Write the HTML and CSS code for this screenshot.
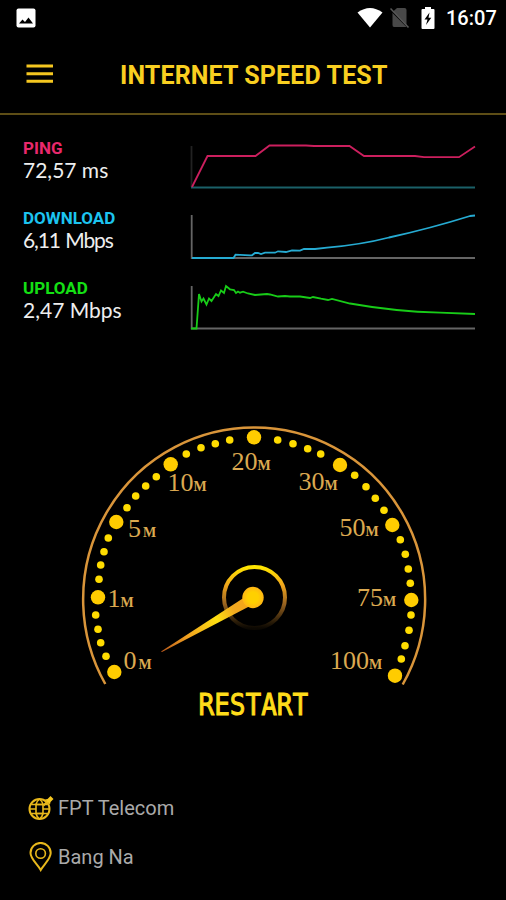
FILE: index.html
```
<!DOCTYPE html>
<html lang="en">

<head>
    <meta charset="UTF-8">
    <meta name="viewport" content="width=device-width, initial-scale=1.0">
    <title>Internet Speed Test</title>
    <link rel="stylesheet" href="styles.css">
</head>

<body>
    <div class="status-bar">
        <svg class="status-left" width="20" height="20" viewBox="0 0 20 20">
            <rect x="0.5" y="0.5" width="19" height="19" rx="2" fill="#fff"/>
            <path d="M3 15.5L6.5 11.5L9 14L12.5 9.5L17 15.5Z" fill="#000"/>
        </svg>
        <svg width="26" height="22" viewBox="0 0 26 22">
            <path d="M0.5 5.5Q13 -3.5 25.5 5.5L13 20.5Z" fill="#fff"/>
        </svg>
        <svg class="sim" width="20" height="22" viewBox="0 0 20 22">
            <path d="M7 1H14.5Q16.5 1 16.5 3V20H4Q2.5 20 2.5 18V5Z" fill="#484848"/>
            <path d="M0.5 3L17.5 20" stroke="#000" stroke-width="1.5"/>
            <path d="M0.5 1.5L18.5 20.5" stroke="#585858" stroke-width="1.5"/>
        </svg>
        <svg class="battery" width="14" height="22" viewBox="0 0 14 22">
            <path d="M4 0H10V2H12.5Q13.5 2 13.5 3V21Q13.5 22 12.5 22H1.5Q0.5 22 0.5 21V3Q0.5 2 1.5 2H4Z" fill="#fff"/>
            <path d="M8.5 5.5L3.5 12.5H6.5L5 18L10.3 10.7H7.5Z" fill="#000"/>
        </svg>
        <span class="clock">16:07</span>
    </div>

    <header class="header">
        <svg class="menu" width="28" height="20" viewBox="0 0 28 20">
            <path d="M0.5 2H27M0.5 9.7H27M0.5 17.3H27" stroke="#f5c720" stroke-width="3"/>
        </svg>
        <h1>INTERNET SPEED TEST</h1>
    </header>

    <main>
        <section class="results">
            <div class="result">
                <div class="reading">
                    <h2 class="ping">PING</h2>
                    <p class="value">72,57 ms</p>
                </div>
                <svg class="chart" width="300" height="60" viewBox="180 140 300 60">
                    <path d="M191.5 146V187" stroke="#222"/>
                    <path d="M191 187.5H475" stroke="#1a6068"/>
                    <path d="M192 187L207.5 156H255.5L269.5 145.5H306L314 146H349.5L364 156H415L424 157.2H459L475 146.5" stroke="#cc1f5e"/>
                </svg>
            </div>
            <div class="result">
                <div class="reading">
                    <h2 class="download">DOWNLOAD</h2>
                    <p class="value narrow">6,11 Mbps</p>
                </div>
                <svg class="chart" width="300" height="60" viewBox="180 210 300 60">
                    <path d="M191.7 215V258H475" stroke="#656565"/>
                    <path d="M192 258H233.5L235.5 254.7L250 255.3H252L255 253H258L261 254L265 252.7H275L278 251.3L286 252L292 250.3L300 250.7L304 249L315 249L327 247.7Q362 244.5 389 237.5Q430 228.5 470 216L475 215.5" stroke="#26abd2"/>
                </svg>
            </div>
            <div class="result">
                <div class="reading">
                    <h2 class="upload">UPLOAD</h2>
                    <p class="value">2,47 Mbps</p>
                </div>
                <svg class="chart" width="300" height="60" viewBox="180 280 300 60">
                    <path d="M191.7 286V328.5H475" stroke="#656565"/>
                    <path d="M191 328.5H196.500L199 294L201.5 301.5L203.5 298.5L206.5 304.5L209 298.5L211.5 301L216 294L218.5 296L221 290.5L224 293L226 286L230 289.3L234 290L236 293L238 291.5L240 292.7L243 291.7L248 293.5L255 295L267 294L270 294.5L278 296.5L285 296L290 296.5H300L310 298L313 297L321 298.7L328 300L332 299L350 303.5Q395 311.5 440 312.7L475 314" stroke="#18cc18"/>
                </svg>
            </div>
        </section>

        <section class="gauge">
            <svg width="370" height="280" viewBox="69 415 370 280">
                <defs>
                    <linearGradient id="ring" x1="0" y1="0" x2="0" y2="1">
                        <stop offset="0" stop-color="#ffe600"/>
                        <stop offset="0.3" stop-color="#f0a51c"/>
                        <stop offset="0.6" stop-color="#9a6420"/>
                        <stop offset="0.9" stop-color="#2a1c08"/>
                        <stop offset="1" stop-color="#0c0802"/>
                    </linearGradient>
                    <linearGradient id="needle" gradientUnits="userSpaceOnUse" x1="161" y1="651" x2="246" y2="601">
                        <stop offset="0" stop-color="#b8581c"/>
                        <stop offset="0.3" stop-color="#f0a020"/>
                        <stop offset="0.65" stop-color="#ffe010"/>
                        <stop offset="0.85" stop-color="#f0a820"/>
                        <stop offset="1" stop-color="#f5a518"/>
                    </linearGradient>
                    <radialGradient id="hub">
                        <stop offset="0.5" stop-color="#ffd000"/>
                        <stop offset="1" stop-color="#ffb515"/>
                    </radialGradient>
                </defs>

                <path class="rim" d="M105.300 684A171 171.800 0 1 1 402.700 684.500"/>

                <!-- scale: major marks -->
                <g fill="#ffcc00">
                    <circle cx="114.3" cy="672" r="7.2"/>
                    <circle cx="98" cy="597.3" r="7.2"/>
                    <circle cx="116.3" cy="522" r="7.2"/>
                    <circle cx="170.7" cy="464.3" r="7.2"/>
                    <circle cx="254" cy="437.3" r="7.2"/>
                    <circle cx="340" cy="465" r="7.2"/>
                    <circle cx="392.3" cy="525" r="7.2"/>
                    <circle cx="411.3" cy="600" r="7.2"/>
                    <circle cx="395" cy="675.7" r="7.2"/>
                </g>

                <!-- scale: minor marks -->
                <g fill="#ffdc00">
                    <circle cx="106" cy="656.3" r="3.8"/>
                    <circle cx="100.7" cy="642.7" r="3.8"/>
                    <circle cx="98" cy="629.3" r="3.8"/>
                    <circle cx="95.7" cy="615" r="3.8"/>
                    <circle cx="99" cy="579.3" r="3.8"/>
                    <circle cx="100.7" cy="565" r="3.8"/>
                    <circle cx="104" cy="551.7" r="3.8"/>
                    <circle cx="108.3" cy="538" r="3.8"/>
                    <circle cx="127" cy="507.7" r="3.8"/>
                    <circle cx="135.7" cy="496" r="3.8"/>
                    <circle cx="145.7" cy="486" r="3.8"/>
                    <circle cx="156.3" cy="476.7" r="3.8"/>
                    <circle cx="186.3" cy="454" r="3.8"/>
                    <circle cx="201" cy="447.7" r="3.8"/>
                    <circle cx="215.3" cy="443.7" r="3.8"/>
                    <circle cx="229.7" cy="440" r="3.8"/>
                    <circle cx="277.7" cy="440" r="3.8"/>
                    <circle cx="293" cy="443.7" r="3.8"/>
                    <circle cx="307.7" cy="448.7" r="3.8"/>
                    <circle cx="320.7" cy="454" r="3.8"/>
                    <circle cx="354.7" cy="475.3" r="3.8"/>
                    <circle cx="366" cy="486.7" r="3.8"/>
                    <circle cx="375.3" cy="498.3" r="3.8"/>
                    <circle cx="384" cy="510.3" r="3.8"/>
                    <circle cx="400.3" cy="539.7" r="3.8"/>
                    <circle cx="405.3" cy="554.3" r="3.8"/>
                    <circle cx="408.3" cy="569" r="3.8"/>
                    <circle cx="410.3" cy="583.3" r="3.8"/>
                    <circle cx="411" cy="615" r="3.8"/>
                    <circle cx="409" cy="630.3" r="3.8"/>
                    <circle cx="405" cy="645.7" r="3.8"/>
                    <circle cx="401.3" cy="659" r="3.8"/>
                </g>

                <g class="labels">
                    <text x="123.5" y="669">0<tspan class="unit" dx="2">M</tspan></text>
                    <text x="107.5" y="606.7">1<tspan class="unit">M</tspan></text>
                    <text x="128" y="537">5<tspan class="unit" dx="2">M</tspan></text>
                    <text x="167.5" y="490.7">10<tspan class="unit">M</tspan></text>
                    <text x="231.5" y="470">20<tspan class="unit">M</tspan></text>
                    <text x="298.5" y="490">30<tspan class="unit">M</tspan></text>
                    <text x="339.5" y="535.7">50<tspan class="unit">M</tspan></text>
                    <text x="357" y="605.5">75<tspan class="unit">M</tspan></text>
                    <text x="330" y="669">100<tspan class="unit">M</tspan></text>
                </g>

                <circle cx="254.5" cy="597.5" r="30.5" fill="none" stroke="url(#ring)" stroke-width="4"/>
                <path d="M161 651.5L245 597L250 606L162 652Z" fill="url(#needle)"/>
                <circle cx="253" cy="597.5" r="10.7" fill="url(#hub)"/>
            </svg>
            <button class="restart">RESTART</button>
        </section>
    </main>

    <footer class="info">
        <div class="info-row">
            <svg width="26" height="26" viewBox="0 0 26 26" fill="none" stroke="#e8b81c" stroke-width="1.6">
                <circle cx="11.5" cy="14" r="10" stroke-width="2"/>
                <path d="M8 9.500H15V18.500H8Z"/>
                <path d="M8 9.5Q8.500 6.500 11.5 4Q14.500 6.500 15 9.5M8 18.5Q8.500 21.500 11.5 24Q14.500 21.500 15 18.5"/>
                <path d="M3.500 9.500H19.500M3.500 18.500H19.500M1.500 14H8M15 14H21.500"/>
                <path d="M15.500 10.500L20 6" stroke-width="2"/>
                <path d="M17 4.500L19.500 4L22.500 1L25.500 4L22.500 7L22 9.500Z" fill="#f5c720" stroke="none"/>
            </svg>
            <span>FPT Telecom</span>
        </div>
        <div class="info-row">
            <svg width="26" height="30" viewBox="0 0 26 30" fill="none" stroke="#e8b81c">
                <path d="M12.7 28C10 23 2.5 17 2.5 11A10 10 0 0 1 22.7 11C22.7 17 15.4 23 12.7 28Z" stroke-width="2"/>
                <circle cx="12.6" cy="11.5" r="4.8" stroke-width="1.6"/>
            </svg>
            <span>Bang Na</span>
        </div>
    </footer>
</body>

</html>
```
FILE: styles.css
```
* {
    box-sizing: border-box;
}

body {
    margin: 0;
    width: 506px;
    height: 900px;
    background-color: #000;
    color: #fff;
    font-family: Roboto, sans-serif;
    overflow: hidden;
}

h1,
h2,
p {
    margin: 0;
}

svg {
    display: block;
    flex-shrink: 0;
}

.status-bar {
    display: flex;
    align-items: center;
    height: 35px;
    padding: 0 10px 0 16px;
}

.status-left {
    margin-right: auto;
}

.sim {
    margin-left: 7px;
}

.battery {
    margin-left: 11px;
}

.clock {
    width: 50px;
    margin-left: 11px;
    font-size: 20px;
    font-weight: 500;
    white-space: nowrap;
}

.header {
    display: flex;
    align-items: center;
    height: 80px;
    padding-left: 26px;
    border-bottom: 2px solid #5e4e16;
}

.menu {
    margin-right: 66px;
}

.header h1 {
    margin-top: 2px;
    color: #f9cf20;
    font-size: 25px;
    font-weight: 700;
    letter-spacing: 0.13px;
    white-space: nowrap;
}

.results {
    padding: 25px 26px 0 23px;
}

.result {
    display: flex;
    justify-content: space-between;
    height: 70px;
}

.reading {
    margin-top: -1px;
}

.reading h2 {
    font-size: 17px;
    font-weight: 700;
    line-height: 18px;
}

.ping {
    color: #e8286c;
}

.download {
    color: #1cc4f0;
}

.upload {
    color: #14e014;
}

.value {
    font-family: Lato, sans-serif;
    font-size: 21px;
    line-height: 26px;
    color: #eee;
    white-space: nowrap;
}

.value.narrow {
    letter-spacing: -1.1px;
    word-spacing: 1px;
}

.chart path {
    fill: none;
    stroke-width: 1.8;
}

.gauge {
    display: flex;
    flex-direction: column;
    align-items: center;
    padding: 65px 0 0 1px;
}

.rim {
    fill: none;
    stroke: #d9953a;
    stroke-width: 2.5;
}

.labels {
    fill: #dba950;
    font-family: "Liberation Serif", serif;
    font-size: 26px;
}

.labels .unit {
    font-size: 14px;
    font-weight: 700;
}

.restart {
    border: none;
    margin-top: -2px;
    padding: 0;
    background: none;
    color: #ffdc1a;
    font-family: "DejaVu Sans Mono", monospace;
    font-size: 31px;
    font-weight: 400;
    line-height: 22px;
    -webkit-text-stroke: 1px #ffdc1a;
    transform: scaleX(0.84);
    cursor: pointer;
}

.info {
    padding: 68px 0 0 28px;
}

.info-row {
    display: flex;
    align-items: center;
    gap: 4px;
    height: 49px;
    font-size: 20px;
    color: #aaa;
}
```
